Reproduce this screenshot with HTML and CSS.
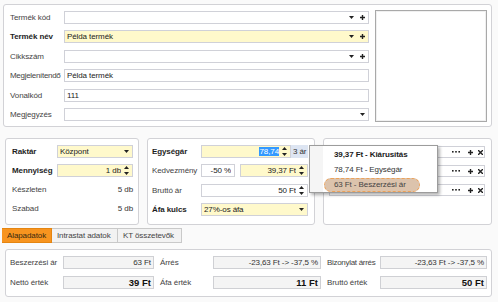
FILE: index.html
```html
<!DOCTYPE html>
<html lang="hu">
<head>
  <meta charset="UTF-8">
  <title>Termék</title>
  <link rel="stylesheet" href="styles.css">
</head>
<body>
  <div class="page">
    <!-- Product header -->
    <div class="panel top-panel">
      <div class="form">
        <div class="row">
          <span class="lbl">Termék kód</span>
          <div class="field"><span class="val"></span>
            <svg class="ico" width="5" height="3" viewBox="0 0 5 3"><polygon points="0,0 5,0 2.5,3"/></svg>
            <svg class="ico plus" width="5" height="5" viewBox="0 0 5 5"><path d="M2.5 0V5M0 2.5H5"/></svg>
          </div>
        </div>
        <div class="row">
          <span class="lbl bold">Termék név</span>
          <div class="field yellow"><span class="val">Példa termék</span>
            <svg class="ico" width="5" height="3" viewBox="0 0 5 3"><polygon points="0,0 5,0 2.5,3"/></svg>
            <svg class="ico plus" width="5" height="5" viewBox="0 0 5 5"><path d="M2.5 0V5M0 2.5H5"/></svg>
          </div>
        </div>
        <div class="row">
          <span class="lbl">Cikkszám</span>
          <div class="field"><span class="val"></span>
            <svg class="ico" width="5" height="3" viewBox="0 0 5 3"><polygon points="0,0 5,0 2.5,3"/></svg>
            <svg class="ico plus" width="5" height="5" viewBox="0 0 5 5"><path d="M2.5 0V5M0 2.5H5"/></svg>
          </div>
        </div>
        <div class="row">
          <span class="lbl tight">Megjelenítendő</span>
          <div class="field"><span class="val">Példa termék</span></div>
        </div>
        <div class="row">
          <span class="lbl">Vonalkód</span>
          <div class="field"><span class="val">111</span></div>
        </div>
        <div class="row">
          <span class="lbl">Megjegyzés</span>
          <div class="field"><span class="val"></span>
            <svg class="ico" width="5" height="3" viewBox="0 0 5 3"><polygon points="0,0 5,0 2.5,3"/></svg>
          </div>
        </div>
      </div>
      <div class="image-box"></div>
    </div>

    <!-- Stock, price, extras -->
    <div class="mid">
      <div class="panel stock">
        <div class="grid-row">
          <span class="lbl bold">Raktár</span>
          <div class="field yellow"><span class="val">Központ</span>
            <svg class="ico" width="5" height="3" viewBox="0 0 5 3"><polygon points="0,0 5,0 2.5,3"/></svg>
          </div>
        </div>
        <div class="grid-row">
          <span class="lbl bold">Mennyiség</span>
          <div class="field yellow"><span class="val right">1 db</span>
            <svg class="spin" width="5" height="9" viewBox="0 0 5 9"><polygon points="0,3 2.5,0 5,3"/><polygon points="0,6 5,6 2.5,9"/></svg>
          </div>
        </div>
        <div class="grid-row">
          <span class="lbl">Készleten</span>
          <span class="plain">5 db</span>
        </div>
        <div class="grid-row">
          <span class="lbl">Szabad</span>
          <span class="plain">5 db</span>
        </div>
      </div>

      <div class="panel price">
        <div class="grid-row">
          <span class="lbl bold">Egységár</span>
          <div class="pair">
            <div class="field yellow grow"><span class="val right"><span class="sel">78,74</span></span>
              <svg class="spin" width="5" height="9" viewBox="0 0 5 9"><polygon points="0,3 2.5,0 5,3"/><polygon points="0,6 5,6 2.5,9"/></svg>
            </div>
            <span class="btn-ar">3 ár</span>
          </div>
        </div>
        <div class="grid-row">
          <span class="lbl">Kedvezmény</span>
          <div class="pair gap">
            <div class="field small"><span class="val right">-50 %</span></div>
            <div class="field yellow grow"><span class="val right">39,37 Ft</span>
              <svg class="spin" width="5" height="9" viewBox="0 0 5 9"><polygon points="0,3 2.5,0 5,3"/><polygon points="0,6 5,6 2.5,9"/></svg>
            </div>
          </div>
        </div>
        <div class="grid-row">
          <span class="lbl">Bruttó ár</span>
          <div class="field"><span class="val right">50 Ft</span>
            <svg class="spin" width="5" height="9" viewBox="0 0 5 9"><polygon points="0,3 2.5,0 5,3"/><polygon points="0,6 5,6 2.5,9"/></svg>
          </div>
        </div>
        <div class="grid-row">
          <span class="lbl bold">Áfa kulcs</span>
          <div class="field yellow"><span class="val">27%-os áfa</span>
            <svg class="ico" width="5" height="3" viewBox="0 0 5 3"><polygon points="0,0 5,0 2.5,3"/></svg>
          </div>
        </div>
      </div>

      <div class="panel extra">
        <div class="field"><span class="val"></span>
          <svg class="ico dots" width="8" height="2" viewBox="0 0 8 2"><rect x="0" y="0" width="1.6" height="1.6"/><rect x="3.2" y="0" width="1.6" height="1.6"/><rect x="6.4" y="0" width="1.6" height="1.6"/></svg>
          <svg class="ico plus" width="5" height="5" viewBox="0 0 5 5"><path d="M2.5 0V5M0 2.5H5"/></svg>
          <svg class="ico cross" width="5" height="5" viewBox="0 0 5 5"><path d="M0 0L5 5M5 0L0 5"/></svg>
        </div>
        <div class="field"><span class="val"></span>
          <svg class="ico dots" width="8" height="2" viewBox="0 0 8 2"><rect x="0" y="0" width="1.6" height="1.6"/><rect x="3.2" y="0" width="1.6" height="1.6"/><rect x="6.4" y="0" width="1.6" height="1.6"/></svg>
          <svg class="ico plus" width="5" height="5" viewBox="0 0 5 5"><path d="M2.5 0V5M0 2.5H5"/></svg>
          <svg class="ico cross" width="5" height="5" viewBox="0 0 5 5"><path d="M0 0L5 5M5 0L0 5"/></svg>
        </div>
        <div class="field"><span class="val"></span>
          <svg class="ico dots" width="8" height="2" viewBox="0 0 8 2"><rect x="0" y="0" width="1.6" height="1.6"/><rect x="3.2" y="0" width="1.6" height="1.6"/><rect x="6.4" y="0" width="1.6" height="1.6"/></svg>
          <svg class="ico plus" width="5" height="5" viewBox="0 0 5 5"><path d="M2.5 0V5M0 2.5H5"/></svg>
          <svg class="ico cross" width="5" height="5" viewBox="0 0 5 5"><path d="M0 0L5 5M5 0L0 5"/></svg>
        </div>
      </div>

      <!-- Price list dropdown -->
      <div class="popup">
        <div class="item bold">39,37 Ft - Kiárusítás</div>
        <div class="item">78,74 Ft - Egységár</div>
        <div class="item hot"><span>63 Ft - Beszerzési ár</span></div>
      </div>
    </div>

    <!-- Tabs -->
    <div class="tabs">
      <span class="tab active">Alapadatok</span>
      <span class="tab">Intrastat adatok</span>
      <span class="tab">KT összetevők</span>
    </div>

    <div class="panel bottom">
      <span class="lbl">Beszerzési ár</span>
      <div class="ro"><span>63 Ft</span></div>
      <span class="lbl pad">Árrés</span>
      <div class="ro"><span>-23,63 Ft -&gt; -37,5 %</span></div>
      <span class="lbl pad tight">Bizonylat árrés</span>
      <div class="ro"><span>-23,63 Ft -&gt; -37,5 %</span></div>

      <span class="lbl">Nettó érték</span>
      <div class="ro"><span class="big">39 Ft</span></div>
      <span class="lbl pad">Áfa érték</span>
      <div class="ro"><span class="big">11 Ft</span></div>
      <span class="lbl pad">Bruttó érték</span>
      <div class="ro"><span class="big">50 Ft</span></div>
    </div>
  </div>
</body>
</html>
```

FILE: styles.css
```css
/* Global */
* {
  margin: 0;
  padding: 0;
  box-sizing: border-box;
}

body {
  background: #fafafa;
  font-family: 'Liberation Sans', Arial, sans-serif;
  font-size: 8px;
  letter-spacing: -0.1px;
  color: #333;
}

.page {
  width: 498px;
  height: 302px;
  padding: 4px 6px 0 3px;
}

/* Panels */
.panel {
  background: #ffffff;
  border: 1px solid #d2d2d6;
  border-radius: 3px;
}

.lbl {
  color: #444;
  white-space: nowrap;
}

.lbl.tight {
  letter-spacing: -0.3px;
}

.bold {
  font-weight: bold;
  color: #1e1e1e;
}

/* Inputs */
.field {
  display: flex;
  align-items: center;
  gap: 6px;
  height: 13px;
  padding: 0 3px 0 2px;
  background: #ffffff;
  border: 1px solid #d0d1d8;
  color: #222;
}

.field.yellow {
  background: #fff9cb;
}

.val {
  flex: 1;
  white-space: nowrap;
  overflow: hidden;
}

.val.right {
  text-align: right;
}

.ico {
  fill: #222;
  flex-shrink: 0;
}

.ico.plus,
.ico.cross {
  fill: none;
  stroke: #222;
  stroke-width: 1.4;
}

.spin {
  fill: #222;
  flex-shrink: 0;
  margin-left: -3px;
}

.sel {
  background: #3399ff;
  color: #ffffff;
}

/* Top panel */
.top-panel {
  display: flex;
  gap: 6px;
  height: 123px;
  padding: 5px 4px 0 6px;
}

.form {
  flex: 1;
  display: flex;
  flex-direction: column;
  gap: 6.4px;
  padding-top: 1px;
}

.row {
  display: flex;
  align-items: center;
}

.row .lbl {
  width: 54px;
}

.row .field {
  flex: 1;
}

.image-box {
  width: 112px;
  height: 112px;
  background: #ffffff;
  border: 1px solid #a9a9a9;
  box-shadow: inset 0 0 0 1px #f0f0f0;
}

/* Middle panels */
.mid {
  position: relative;
  display: flex;
  gap: 8px;
  height: 87px;
  margin: 11px 0 0 2px;
}

.stock {
  width: 134px;
  padding: 6px 5px 0 6px;
  display: flex;
  flex-direction: column;
  gap: 6px;
}

.stock .grid-row {
  display: grid;
  grid-template-columns: 45px 76px;
  align-items: center;
  height: 13px;
}

.plain {
  text-align: right;
  color: #333;
}

.price {
  width: 168px;
  padding: 6px 6px 0 4px;
  display: flex;
  flex-direction: column;
  gap: 6.3px;
}

.price .grid-row {
  display: grid;
  grid-template-columns: 49px 107px;
  align-items: center;
  height: 13px;
}

.pair {
  display: flex;
  height: 13px;
}

.pair.gap {
  gap: 5px;
}

.grow {
  flex: 1;
}

.field.small {
  width: 34px;
}

.btn-ar {
  width: 17px;
  padding-left: 2px;
  line-height: 13px;
  background: #dde5f2;
  color: #333;
}

.extra {
  flex: 1;
  padding: 7px 6px 0 5px;
  display: flex;
  flex-direction: column;
  gap: 7px;
}

.extra .field {
  height: 12px;
  gap: 5px;
  padding-right: 1px;
}

.ico.dots {
  margin-right: 3px;
}

/* Dropdown popup */
.popup {
  position: absolute;
  left: 304px;
  top: 7px;
  width: 129px;
  height: 48px;
  padding-top: 1px;
  background: linear-gradient(to right, #f5f5f5 0, #f5f5f5 13px, #ffffff 13px);
  border: 1px solid #9c9c9c;
  box-shadow: 2px 2px 3px rgba(0, 0, 0, 0.3);
}

.item {
  height: 15px;
  line-height: 15px;
  padding-left: 24px;
  color: #333;
}

.item.bold {
  color: #1a1a1a;
}

.item.hot {
  height: 14px;
  margin: 1px 0 0 14px;
  padding-left: 9px;
  line-height: 12px;
  width: 96px;
  background: #dcc3ac;
  border: 1px dashed #eca25a;
  border-radius: 7px;
  color: #444;
}

/* Tabs */
.tabs {
  display: flex;
  height: 15px;
  margin: 3px 0 0 -1px;
}

.tab {
  height: 15px;
  line-height: 14px;
  padding: 0 5px;
  background: #f2f2f2;
  border: 1px solid #c9c9c9;
  border-left: none;
  color: #444;
  white-space: nowrap;
}

.tab:nth-child(2) {
  width: 66px;
}

.tab:nth-child(3) {
  width: 64px;
}

.tab.active {
  width: 50px;
  background: #f7941f;
  border-color: #e58510;
  color: #3a2a10;
}

/* Bottom summary */
.bottom {
  display: grid;
  grid-template-columns: 53px 91px 59px 108px 59px 107px;
  grid-template-rows: 13px 13px;
  row-gap: 7px;
  align-items: center;
  height: 48px;
  margin: 6px 0 0 2px;
  padding: 6px 4px 0 4px;
}

.lbl.pad {
  padding-left: 6px;
}

.ro {
  height: 13px;
  display: flex;
  align-items: center;
  justify-content: flex-end;
  padding-right: 2px;
  background: #f4f4f4;
  border: 1px solid #cfd0d4;
  color: #333;
  white-space: nowrap;
}

.big {
  font-size: 9.5px;
  font-weight: bold;
  letter-spacing: 0;
  color: #111;
}
```
